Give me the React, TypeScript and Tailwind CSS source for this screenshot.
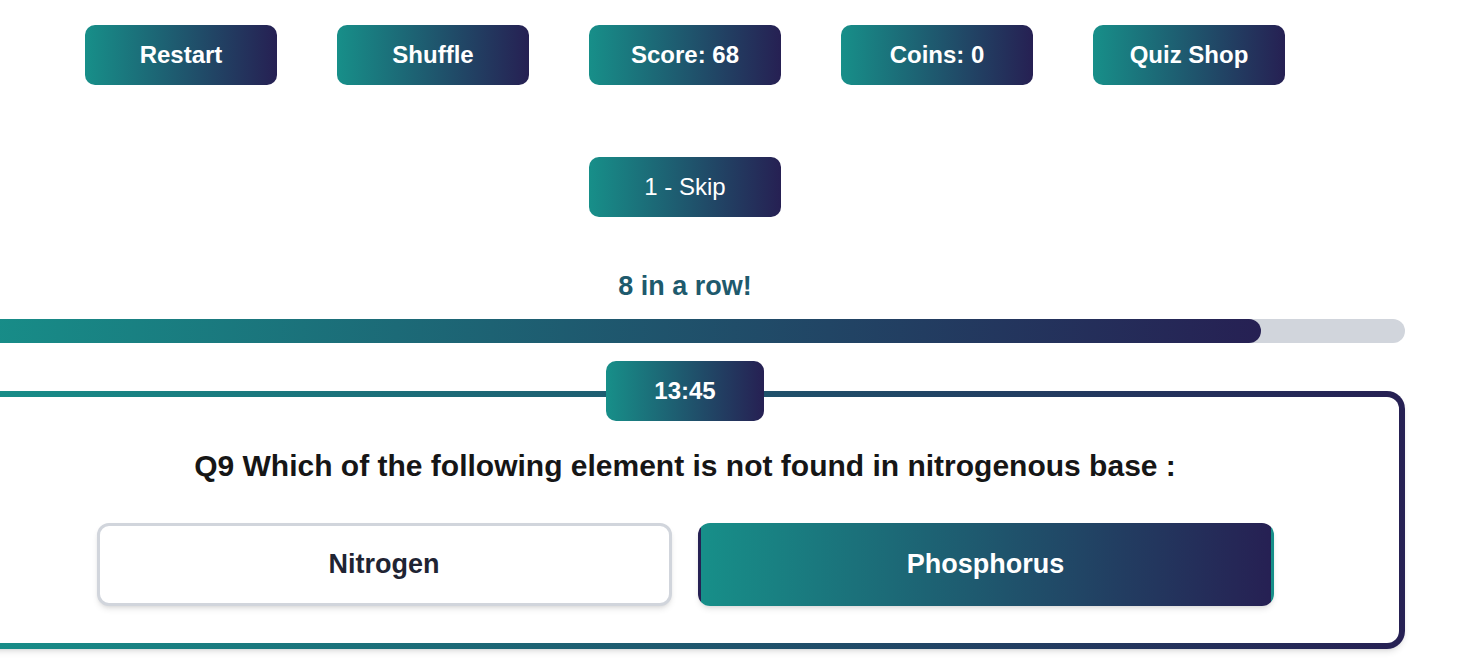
import React from 'react';

const topButtons = ['Restart', 'Shuffle', 'Score: 68', 'Coins: 0', 'Quiz Shop'];

const App: React.FC = () => {
  const progress = 90;

  return (
    <div className="min-h-screen bg-white overflow-hidden [font-family:'Liberation_Sans',Arial,sans-serif]">
      <div className="w-[1440px] ml-[-35px] pt-[25px] flex flex-col items-center">
        {/* top toolbar */}
        <div className="flex justify-center gap-[60px]">
          {topButtons.map((label) => (
            <button
              key={label}
              className="w-[192px] h-[60px] rounded-[10px] bg-linear-to-r/srgb from-[#178f89] to-[#262053] text-white text-[24px] font-bold"
            >
              {label}
            </button>
          ))}
        </div>

        <button className="mt-[72px] w-[192px] h-[60px] rounded-[10px] bg-linear-to-r/srgb from-[#178f89] to-[#262053] text-white text-[24px]">
          1 - Skip
        </button>

        <p className="mt-[54px] text-[27px] leading-[30px] font-bold text-[#1e5a6d]">8 in a row!</p>

        {/* streak progress */}
        <div className="mt-[18px] w-full h-[24px] rounded-full bg-gray-300">
          <div
            className="h-full rounded-r-full bg-linear-to-r/srgb from-[#178f89] to-[#262053]"
            style={{ width: `${progress}%` }}
          />
        </div>

        {/* question card */}
        <div className="relative mt-[48px] w-full rounded-[18px] p-[6px] bg-linear-to-r/srgb from-[#178f89] to-[#262053] shadow-md">
          <div className="absolute left-1/2 -translate-x-1/2 top-[-30px] w-[158px] h-[60px] rounded-[10px] bg-linear-to-r/srgb from-[#178f89] to-[#262053] flex items-center justify-center text-white text-[24px] font-bold">
            13:45
          </div>
          <div className="bg-white rounded-[12px] pt-[52px] pb-[37px] flex flex-col items-center">
            <h2 className="text-[30px] leading-[34px] font-bold text-[#161616]">
              Q9 Which of the following element is not found in nitrogenous base :
            </h2>
            <div className="mt-[40px] grid grid-cols-2 gap-[25px]">
              <button className="w-[575px] h-[83px] rounded-[12px] border-[3px] border-gray-300 bg-white shadow-md text-[27px] font-bold text-[#1f2433]">
                Nitrogen
              </button>
              <button className="w-[576px] h-[83px] rounded-[12px] border-[3px] border-transparent bg-linear-to-r/srgb from-[#178f89] to-[#262053] shadow-md text-[27px] font-bold text-white">
                Phosphorus
              </button>
            </div>
          </div>
        </div>
      </div>
    </div>
  );
};

export default App;
